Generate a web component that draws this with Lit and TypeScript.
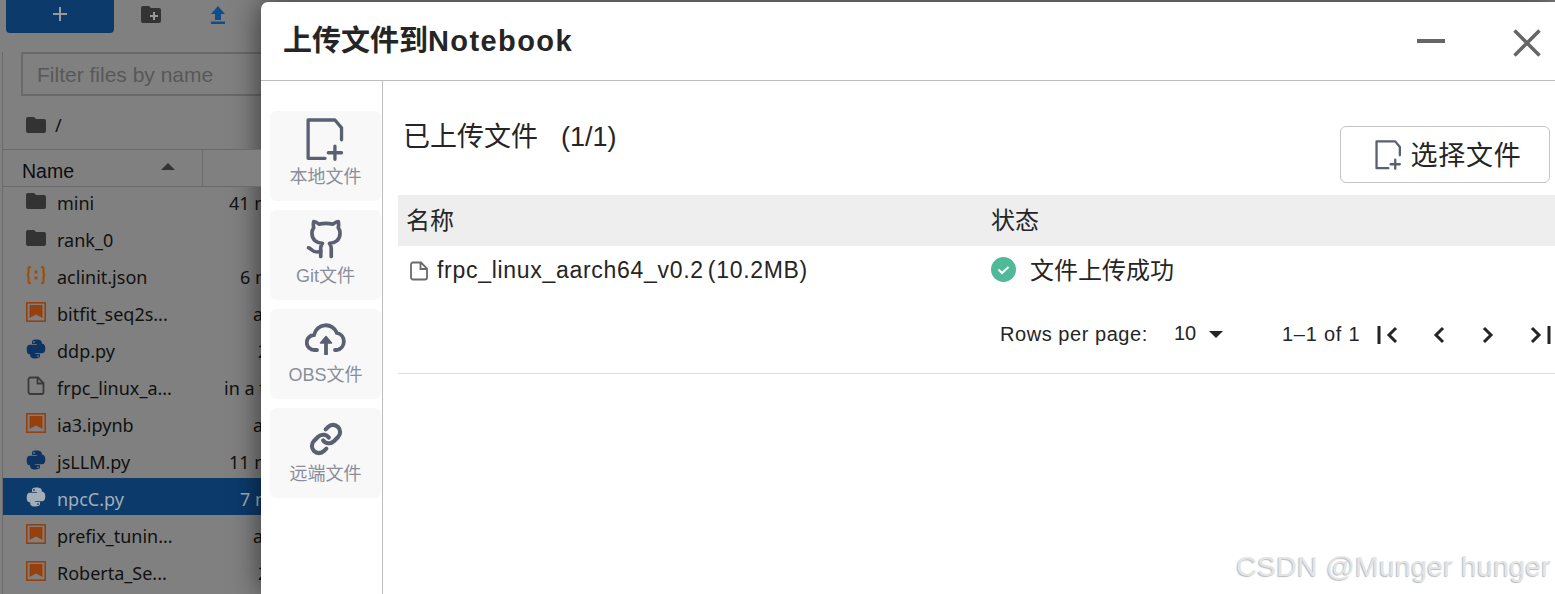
import { LitElement, html, css, svg } from "lit";
import { customElement } from "lit/decorators.js";

const folderIcon = html`<svg class="ficon" viewBox="0 0 20 20"><path fill="#333" d="M2 2h6l2 2h8a2 2 0 0 1 2 2v10a2 2 0 0 1-2 2H2a2 2 0 0 1-2-2V4a2 2 0 0 1 2-2z"/></svg>`;
const jsonIcon = html`<svg class="ficon" viewBox="0 0 20 20" fill="none" stroke="#9a500f" stroke-width="2.2"><path d="M5 2H4C2.500 2 2.500 3 2.500 4v3.500C2.500 9 1.500 10 .8 10c.7 0 1.700 1 1.700 2.500V16c0 1 0 2 1.500 2h1M15 2h1c1.500 0 1.500 1 1.500 2v3.500c0 1.500 1 2.500 1.700 2.500-.7 0-1.700 1-1.700 2.500V16c0 1 0 2-1.500 2h-1"/><path d="M10 5.500v3M10 11.500v3" stroke-width="3"/></svg>`;
const bookIcon = html`<svg class="ficon" viewBox="0 0 20 20"><rect x=".8" y=".8" width="18.400" height="18.400" fill="none" stroke="#96400e" stroke-width="1.600"/><path fill="#96400e" d="M3.500 3h13v13L10 12.500 3.500 16z"/></svg>`;
const fileIcon = html`<svg class="ficon" viewBox="0 0 20 20" fill="none" stroke="#3a3a3a" stroke-width="1.800"><path d="M2.500 3.500a2 2 0 0 1 2-2H12l5.500 5.500v9a2 2 0 0 1-2 2h-11a2 2 0 0 1-2-2zM11.500 1.500v6h6"/></svg>`;
const pyPath = "M10 0C5 0 5.300 2.200 5.300 2.200v2.300H10.200v.7H3.300S0 4.800 0 9.900s2.900 4.900 2.900 4.900h1.700v-2.400s-.1-2.900 2.900-2.900h4.900s2.700 0 2.700-2.600V2.600S14.700 0 10 0zM7.300 1.500a.9.9 0 1 1 0 1.800.9.9 0 0 1 0-1.800z";
const pyIcon = (color: string) => html`<svg class="ficon" viewBox="0 0 20 20" fill=${color}><path d=${pyPath} transform="translate(.7 .5)"/><path d=${pyPath} transform="rotate(180 9.650 9.750)"/></svg>`;

const rows = [
  { name: "mini", icon: folderIcon, age: "41 m", at: 175 },
  { name: "rank_0", icon: folderIcon, age: "", at: 0 },
  { name: "aclinit.json", icon: jsonIcon, age: "6 m", at: 186 },
  { name: "bitfit_seq2s...", icon: bookIcon, age: "a", at: 199 },
  { name: "ddp.py", icon: pyIcon("#0d3362"), age: "2", at: 204 },
  { name: "frpc_linux_a...", icon: fileIcon, age: "in a t", at: 170 },
  { name: "ia3.ipynb", icon: bookIcon, age: "a", at: 199 },
  { name: "jsLLM.py", icon: pyIcon("#0d3362"), age: "11 m", at: 175 },
  { name: "npcC.py", icon: pyIcon("#a4adb8"), age: "7 m", at: 186, selected: true },
  { name: "prefix_tunin...", icon: bookIcon, age: "a", at: 199 },
  { name: "Roberta_Se...", icon: bookIcon, age: "2", at: 204 },
];

const addFile = svg`<path d="M57 122H6V6H87L107 30V66M87 85V125M67 105H107" fill="none" stroke-width="10" stroke-linejoin="round" stroke-linecap="round"/>`;

@customElement("file-browser")
class FileBrowser extends LitElement {
  static styles = css`
    :host {
      display: block;
      width: 261px;
      flex: none;
      height: 594px;
      overflow: hidden;
      font-family: "Noto Sans", "Open Sans", sans-serif;
      color: #111;
    }
    .toolbar {
      height: 33px;
      display: flex;
      padding-left: 6px;
      align-items: center;
    }
    .add {
      width: 108px;
      height: 33px;
      background: #0b3a6b;
      border-radius: 0 0 4px 4px;
      display: flex;
      align-items: center;
      justify-content: center;
    }
    .add svg { margin-top: -5px; }
    .tool { width: 20px; height: 20px; margin: -4px 0 0 27px; }
    .tool.up { margin-left: 47px; }
    .body {
      margin: 19px 0 0 2px;
      border-left: 1px solid #6a6a6a;
      height: 542px;
    }
    .filter {
      margin-left: 18px;
      margin-top: 1px;
      height: 44px;
      box-sizing: border-box;
      border: 2px solid #696969;
      border-right: none;
      padding: 2px 0 0 14px;
      display: flex;
      align-items: center;
      font-size: 21px;
      font-family: "Liberation Sans", sans-serif;
      color: #585858;
    }
    .crumb {
      height: 53px;
      box-sizing: border-box;
      display: flex;
      align-items: center;
      gap: 9px;
      padding: 4px 0 0 23px;
      font-size: 18px;
    }
    .head {
      height: 36px;
      border-top: 1px solid #6a6a6a;
      border-bottom: 1px solid #6a6a6a;
      display: flex;
      position: relative;
      z-index: 1;
      background: #808080;
    }
    .head .name {
      width: 200px;
      box-sizing: border-box;
      border-right: 1px solid #6a6a6a;
      padding: 7px 0 0 19px;
      display: flex;
      align-items: center;
      font-size: 19.500px;
      font-family: "Liberation Sans", sans-serif;
      color: #0d0d0d;
    }
    .caret {
      margin-left: auto;
      margin-right: 27px;
      margin-top: -10px;
      border: 7px solid transparent;
      border-top: none;
      border-bottom: 7px solid #333;
    }
    .list { margin-top: -5px; }
    .row {
      height: 37px;
      display: flex;
      align-items: center;
      padding-left: 23px;
      position: relative;
      font-size: 18px;
      white-space: nowrap;
    }
    .row.sel { background: #0b3a6b; color: #a4adb8; }
    .row span.n { margin-left: 11px; padding-top: 5px; }
    .row span.age { position: absolute; padding-top: 5px; }
    .ficon { width: 20px; height: 20px; flex: none; }
  `;

  render() {
    return html`
      <div class="toolbar">
        <div class="add">
          <svg width="16" height="16" viewBox="0 0 16 16" stroke="#9a9a9a" stroke-width="2"><path d="M8 1v14M1 8h14" /></svg>
        </div>
        <svg class="tool" viewBox="0 0 20 20">
          <path fill="#333" d="M2 1h6l2 2h8a2 2 0 0 1 2 2v11a2 2 0 0 1-2 2H2a2 2 0 0 1-2-2V3a2 2 0 0 1 2-2z" />
          <path stroke="#999" stroke-width="2" d="M13 7v8M9 11h8" />
        </svg>
        <svg class="tool up" viewBox="0 0 20 20" fill="#0d4f8b">
          <path d="M10 1 17 9h-4v6H7V9H3zM3 16.500h14V19H3z" />
        </svg>
      </div>
      <div class="body">
        <div class="filter">Filter files by name</div>
        <div class="crumb">${folderIcon}<span>/</span></div>
        <div class="head">
          <div class="name">Name<span class="caret"></span></div>
        </div>
        <div class="list">
          ${rows.map(
            (r) => html`
              <div class="row ${r.selected ? "sel" : ""}">
                ${r.icon}<span class="n">${r.name}</span>
                <span class="age" style="left:${r.at + 51}px">${r.age}</span>
              </div>
            `
          )}
        </div>
      </div>
    `;
  }
}

@customElement("upload-dialog")
class UploadDialog extends LitElement {
  static styles = css`
    :host {
      display: flex;
      flex-direction: column;
      flex: 1;
      min-width: 0;
      margin-top: 2px;
      height: 592px;
      background: #fff;
      border-radius: 7px 0 0 0;
      box-shadow: 0 0 30px rgba(0, 0, 0, 0.6);
      position: relative;
      font-family: "Liberation Sans", "Noto Sans CJK SC", sans-serif;
      color: #252525;
    }
    header {
      height: 79px;
      flex: none;
      box-sizing: border-box;
      border-bottom: 1px solid #bdbdbd;
      display: flex;
      align-items: center;
      padding: 0 0 3px 22px;
    }
    h1 {
      margin: -4px 0 0;
      font-size: 29px;
      font-weight: 700;
      color: #252525;
    }
    h1 span { letter-spacing: 1.400px; }
    .min { margin-left: auto; width: 28px; height: 4px; background: #666; margin-top: 2px; }
    .close { margin: 6px 14px 0 68px; width: 28px; height: 28px; }
    .content { flex: 1; display: flex; min-height: 0; }
    aside {
      width: 122px;
      flex: none;
      box-sizing: border-box;
      border-right: 1px solid #bdbdbd;
      padding: 30px 0 0 9px;
      display: flex;
      flex-direction: column;
      gap: 9px;
    }
    .tab {
      width: 111px;
      height: 90px;
      flex: none;
      background: #f8f8f9;
      border-radius: 6px;
      display: flex;
      flex-direction: column;
      align-items: center;
      justify-content: flex-end;
      gap: 1px;
      padding-bottom: 13px;
      box-sizing: border-box;
      font-size: 18px;
      color: #8a8e99;
    }
    .tab svg { stroke: #5a6072; }
    .tab .cloud { margin-bottom: 4px; }
    .tab .link { margin-bottom: 2px; }
    main { flex: 1; min-width: 0; padding-left: 15px; }
    .top {
      display: flex;
      justify-content: space-between;
      height: 114px;
      box-sizing: border-box;
    }
    h2 {
      margin: 41px 0 0 5px;
      font-size: 27px;
      line-height: 30px;
      font-weight: 400;
      color: #252525;
    }
    h2 span { margin-left: 23px; }
    .pick {
      margin: 45px 5px 0 0;
      width: 210px;
      height: 57px;
      box-sizing: border-box;
      border: 1px solid #c4c4c4;
      border-radius: 6px;
      display: flex;
      align-items: center;
      justify-content: center;
      gap: 8px;
      font-size: 27px;
      letter-spacing: 0.7px;
      color: #252525;
      padding: 0 0 2px 6px;
    }
    .pick svg { stroke: #5a6072; margin-top: 2px; }
    .thead, .tr { display: grid; grid-template-columns: 593px 1fr; align-items: center; }
    .thead {
      height: 51px;
      box-sizing: border-box;
      background: #eee;
      font-size: 24px;
      padding-bottom: 5px;
    }
    .thead div:first-child { padding-left: 8px; }
    .tr { height: 50px; }
    .fname {
      display: flex;
      align-items: center;
      gap: 8px;
      padding: 0 0 2px 11px;
      font-size: 23px;
      letter-spacing: 0.7px;
      word-spacing: -3px;
    }
    .fname svg { flex: none; margin-top: 2px; }
    .status { display: flex; align-items: center; gap: 14px; font-size: 24px; padding-bottom: 6px; }
    .status svg { margin-top: 3px; }
    .pager {
      height: 78px;
      box-sizing: border-box;
      border-bottom: 1px solid #e0e0e0;
      display: flex;
      align-items: center;
      font-size: 20px;
      padding: 0 5px 0 602px;
    }
    .rpp { letter-spacing: 0.55px; width: 174px; flex: none; }
    .sel { width: 35px; flex: none; position: relative; top: -1px; }
    .dn {
      border: 7px solid transparent;
      border-bottom: none;
      border-top: 7px solid #252525;
      flex: none;
    }
    .range { margin-left: 59px; width: 95px; flex: none; letter-spacing: 0.75px; }
    .pg { display: flex; gap: 36px; flex: 1; align-items: center; }
    .pg svg { display: block; flex: none; }
    .pg .prev { margin-left: -2px; }
    .pg .next { margin-left: 1px; }
    .pg .last { margin-left: -1px; }
    .mark {
      position: absolute;
      right: 4px;
      bottom: 11px;
      font-size: 28.500px;
      font-family: "Liberation Sans", sans-serif;
      color: #e4e4e4;
      letter-spacing: 0.2px;
      text-shadow: -1px 1px 1px #bdbdbd;
    }
  `;

  render() {
    return html`
      <header>
        <h1>上传文件到<span>Notebook</span></h1>
        <div class="min"></div>
        <svg class="close" viewBox="0 0 28 28" stroke="#666" stroke-width="3.600"><path d="M1.500 1.500l25 25M26.500 1.500l-25 25" /></svg>
      </header>
      <div class="content">
        <aside>
          <div class="tab">
            <svg width="40" height="43" viewBox="0 0 120 130">${addFile}</svg>本地文件
          </div>
          <div class="tab">
            <svg width="42" height="42" viewBox="0 0 24 24" fill="none" stroke-width="2.100" stroke-linecap="round" stroke-linejoin="round">
              <path d="M15 22v-4a4.800 4.800 0 0 0-1-3.500c3 0 6-2 6-5.500.08-1.250-.27-2.480-1-3.500.28-1.150.28-2.350 0-3.500 0 0-1 0-3 1.500-2.640-.5-5.360-.5-8 0C6 2 5 2 5 2c-.3 1.150-.3 2.350 0 3.500A5.400 5.400 0 0 0 4 9c0 3.500 3 5.500 6 5.500-.39.49-.68 1.050-.85 1.650-.17.6-.22 1.230-.15 1.850v4" />
              <path d="M9 19c-4.500 1.500-5-1.500-7-2" />
            </svg>
            Git文件
          </div>
          <div class="tab">
            <svg class="cloud" width="42" height="34" viewBox="0 0 42 34" fill="none" stroke-width="3.800" stroke-linecap="round">
              <path d="M12 29H9.500A7.500 7.500 0 0 1 9 14 12 12 0 0 1 32 12 8.700 8.700 0 0 1 32 29H30" />
              <path d="M21 33V18" />
              <path d="M15.500 22 21 15.500 26.500 22z" fill="#5a6072" stroke-width="1.500" stroke-linejoin="round" />
            </svg>
            OBS文件
          </div>
          <div class="tab">
            <svg class="link" width="34" height="34" viewBox="0 0 24 24" fill="none" stroke-width="2.900" stroke-linecap="round">
              <path d="M10 13a5 5 0 0 0 7.540.54l3-3a5 5 0 0 0-7.070-7.070l-1.720 1.710" />
              <path d="M14 11a5 5 0 0 0-7.540-.54l-3 3a5 5 0 0 0 7.070 7.070l1.710-1.710" />
            </svg>
            远端文件
          </div>
        </aside>
        <main>
          <div class="top">
            <h2>已上传文件<span>(1/1)</span></h2>
            <div class="pick">
              <svg width="28" height="30" viewBox="0 0 120 130">${addFile}</svg>选择文件
            </div>
          </div>
          <div class="thead"><div>名称</div><div>状态</div></div>
          <div class="tr">
            <div class="fname">
              <svg width="20" height="20" viewBox="0 0 20 20" fill="none" stroke="#6a6a6a" stroke-width="1.800"><path d="M2 3.500a2 2 0 0 1 2-2h8l6 6v9a2 2 0 0 1-2 2H4a2 2 0 0 1-2-2zM11.500 1.500v6.500H18" /></svg>
              <span>frpc_linux_aarch64_v0.2 (10.2MB)</span>
            </div>
            <div class="status">
              <svg width="25" height="25" viewBox="0 0 25 25"><circle cx="12.500" cy="12.500" r="12.500" fill="#4fb99a" /><path d="M7.500 12.500l3.500 3.500 6.500-6" fill="none" stroke="#fff" stroke-width="2" /></svg>
              文件上传成功
            </div>
          </div>
          <div class="pager">
            <span class="rpp">Rows per page:</span>
            <span class="sel">10</span>
            <span class="dn"></span>
            <span class="range">1–1 of 1</span>
            <div class="pg">
              <svg width="21" height="18" viewBox="0 0 21 18" fill="none" stroke="#252525" stroke-width="3"><path d="M2 0v18M19 2l-7 7 7 7" /></svg>
              <svg class="prev" width="13" height="18" viewBox="0 0 13 18" fill="none" stroke="#252525" stroke-width="3"><path d="M11 2 4 9l7 7" /></svg>
              <svg class="next" width="13" height="18" viewBox="0 0 13 18" fill="none" stroke="#252525" stroke-width="3"><path d="M2 2l7 7-7 7" /></svg>
              <svg class="last" width="21" height="18" viewBox="0 0 21 18" fill="none" stroke="#252525" stroke-width="3"><path d="M19 0v18M2 2l7 7-7 7" /></svg>
            </div>
          </div>
        </main>
      </div>
      <div class="mark">CSDN @Munger hunger</div>
    `;
  }
}

@customElement("app-root")
export class AppRoot extends LitElement {
  static styles = css`
    :host {
      display: flex;
      width: 1555px;
      height: 594px;
      overflow: hidden;
      background: #808080;
    }
  `;

  render() {
    return html`<file-browser></file-browser><upload-dialog></upload-dialog>`;
  }
}
